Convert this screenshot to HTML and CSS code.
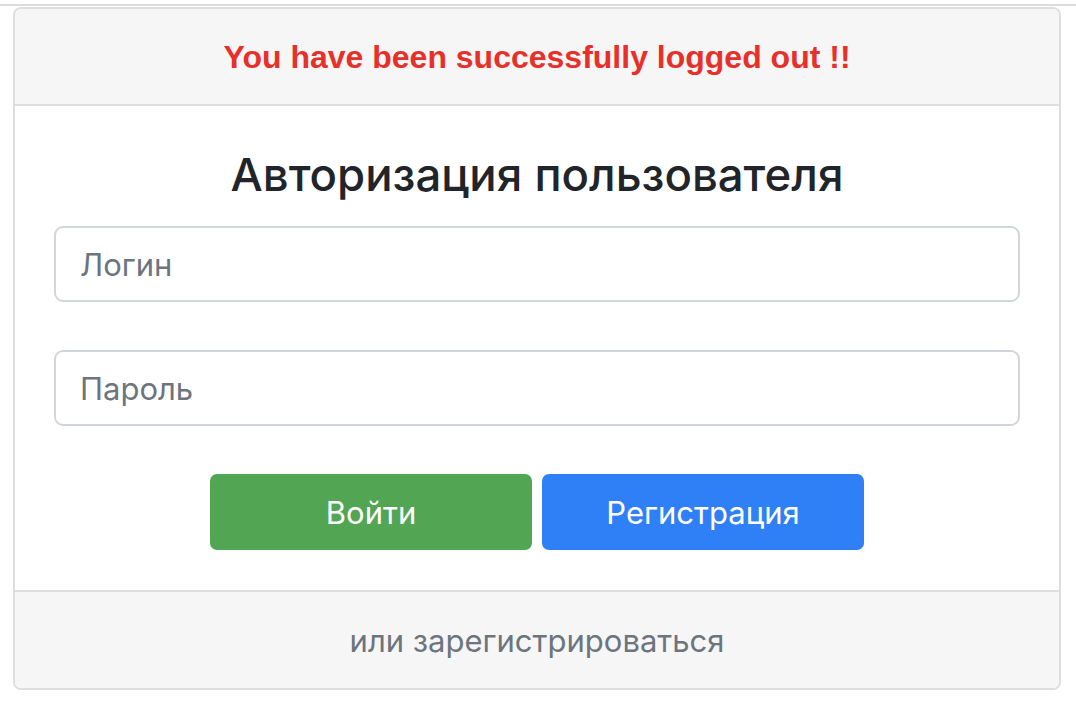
FILE: index.html
```html
<!DOCTYPE html>
<html lang="ru">
<head>
<meta charset="utf-8">
<title>Авторизация пользователя</title>
<link rel="stylesheet" href="styles.css">
</head>
<body>
<div class="topline"></div>
<div class="card">
  <div class="card-header">You have been successfully logged out !!</div>
  <div class="card-body">
    <h4 class="title">Авторизация пользователя</h4>
    <form class="form">
      <input class="field" type="text" placeholder="Логин">
      <input class="field" type="password" placeholder="Пароль">
      <div class="actions">
        <button type="button" class="btn btn-success">Войти</button>
        <button type="button" class="btn btn-primary">Регистрация</button>
      </div>
    </form>
  </div>
  <div class="card-footer">или зарегистрироваться</div>
</div>
</body>
</html>
```
FILE: styles.css
```css
* { box-sizing: border-box; }
html, body { margin: 0; padding: 0; background: #fff; }
body {
  font-family: Inter, "Noto Sans", "Liberation Sans", sans-serif;
  color: #212529;
}
.topline {
  margin-top: 4px;
  height: 2px;
  background: #dcdcdc;
}
.card {
  margin: 1px 15px 0 13px;
  border: 2px solid #dedede;
  border-radius: 8px;
  overflow: hidden;
  background: #fff;
}
.card-header {
  background: #f6f6f6;
  border-bottom: 2px solid #dedede;
  height: 97px;
  display: flex;
  align-items: center;
  justify-content: center;
  color: #e8302a;
  font-family: "Liberation Sans", Arial, sans-serif;
  font-weight: bold;
  font-size: 32px;
  padding-top: 1px;
}
.card-body {
  padding: 40px 39px 40px 39px;
}
.title {
  margin: 0 0 22px;
  text-align: center;
  font-size: 45.5px;
  font-weight: 500;
  line-height: 58px;
  color: #212529;
}
.form {
  display: flex;
  flex-direction: column;
}
.field {
  height: 76px;
  margin-bottom: 48px;
  border: 2px solid #d2d6da;
  border-radius: 9px;
  padding: 0 24px;
  font-family: Inter, "Noto Sans", sans-serif;
  font-size: 31px;
  color: #495057;
  outline: none;
}
.field::placeholder { color: #6c757d; }
.actions {
  display: flex;
  justify-content: center;
  gap: 10px;
}
.btn {
  width: 322px;
  height: 76px;
  border: none;
  border-radius: 7px;
  color: #fff;
  font-family: Inter, "Noto Sans", sans-serif;
  font-size: 31px;
  padding: 0;
}
.btn-success { background: #52a552; }
.btn-primary { background: #2f7ff6; }
.card-footer {
  background: #f6f6f6;
  border-top: 2px solid #dedede;
  height: 98px;
  display: flex;
  align-items: center;
  justify-content: center;
  color: #6c757d;
  font-size: 31px;
}
```
